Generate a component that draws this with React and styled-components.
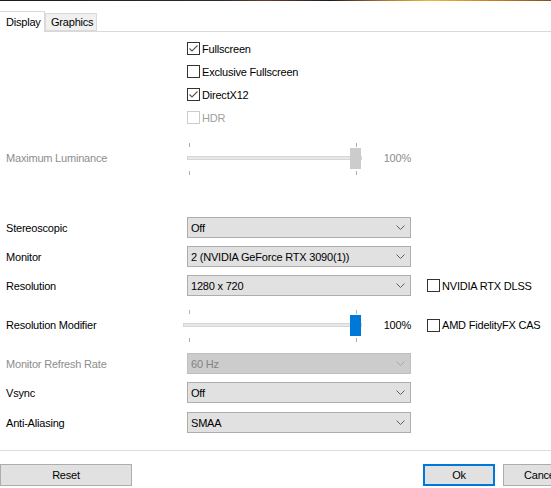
import React from 'react';
import styled, { createGlobalStyle } from 'styled-components';

const Global = createGlobalStyle`
  html, body { margin: 0; padding: 0; background: #fff; }
  body {
    width: 551px;
    height: 488px;
    overflow: hidden;
    font-family: "Liberation Sans", Arial, sans-serif;
    font-size: 11px;
    letter-spacing: -0.2px;
    color: #000;
  }
`;

// dark strip of whatever sits behind the window
const TopStrip = styled.div`
  height: 1px;
  background: linear-gradient(90deg, #1a1a1f 0%, #2a2a33 40%, #6b3a2a 48%, #1c1c22 60%, #b8752a 70%, #f1b43a 78%, #c67a22 90%, #8a4a1a 100%);
`;

const TabBar = styled.div`
  display: flex;
  align-items: flex-end;
  height: 30px;
  border-bottom: 1px solid #d9d9d9;
`;

const Tab = styled.div`
  height: ${p => (p.$active ? '21px' : '18px')};
  margin-bottom: ${p => (p.$active ? '-1px' : '0')};
  box-sizing: border-box;
  padding: 0 ${p => (p.$active ? '6px' : '5px')};
  display: flex;
  align-items: center;
  background: ${p => (p.$active ? '#fff' : '#f0f0f0')};
  border: 1px solid #d9d9d9;
  border-bottom: ${p => (p.$active ? 'none' : '1px solid #d9d9d9')};
  border-left: ${p => (p.$active ? 'none' : '1px solid #d9d9d9')};
  width: ${p => p.$w}px;
`;

const Panel = styled.div`
  padding-top: 5px;
`;

const Row = styled.div`
  display: grid;
  grid-template-columns: 187px 224px auto;
  align-items: center;
  height: ${p => p.$h}px;
  margin-top: ${p => p.$mt || 0}px;
`;

const Label = styled.div`
  padding-left: 6px;
  color: ${p => (p.$disabled ? '#8d8d8d' : '#000')};
  white-space: nowrap;
`;

const CheckWrap = styled.label`
  display: flex;
  align-items: center;
  gap: 2px;
  color: ${p => (p.$disabled ? '#a0a0a0' : '#000')};
  white-space: nowrap;
  padding-left: ${p => p.$pl || 0}px;
`;

const Box = styled.span`
  width: 13px;
  height: 13px;
  box-sizing: border-box;
  border: 1px solid ${p => (p.$disabled ? '#cccccc' : '#333333')};
  background: #fff;
  display: flex;
  align-items: center;
  justify-content: center;
`;

const Check = ({ label, checked, disabled, pl }) => (
  <CheckWrap $disabled={disabled} $pl={pl}>
    <Box $disabled={disabled}>
      {checked && (
        <svg width="11" height="11" viewBox="0 0 11 11">
          <path d="M1.5 5.5 L4 8 L9.5 2.5" fill="none" stroke="#555" strokeWidth="1.1" />
        </svg>
      )}
    </Box>
    {label}
  </CheckWrap>
);

const Combo = styled.div`
  height: 21px;
  box-sizing: border-box;
  border: 1px solid ${p => (p.$disabled ? '#bfbfbf' : '#adadad')};
  background: ${p => (p.$disabled ? '#cccccc' : '#e1e1e1')};
  color: ${p => (p.$disabled ? '#838383' : '#000')};
  display: flex;
  align-items: center;
  justify-content: space-between;
  padding: 0 5px 0 3px;
`;

const Chevron = ({ disabled }) => (
  <svg width="9" height="5" viewBox="0 0 9 5">
    <path d="M0.5 0.5 L4.5 4.5 L8.5 0.5" fill="none" stroke={disabled ? '#a8a8a8' : '#606060'} strokeWidth="1" />
  </svg>
);

const Select = ({ value, disabled }) => (
  <Combo $disabled={disabled}>
    <span>{value}</span>
    <Chevron disabled={disabled} />
  </Combo>
);

const SliderBox = styled.div`
  display: flex;
  align-items: center;
  margin-left: ${p => p.$ml || 0}px;
`;

const Track = styled.div`
  position: relative;
  width: ${p => p.$w}px;
  height: 36px;
`;

const Rail = styled.div`
  position: absolute;
  left: 0;
  right: 0;
  top: 16px;
  height: 4px;
  box-sizing: border-box;
  background: #e7e7e7;
  border: 1px solid #d6d6d6;
`;

const Tick = styled.div`
  position: absolute;
  left: ${p => p.$x}px;
  top: ${p => p.$y}px;
  width: 1px;
  height: 4px;
  background: #b0b0b0;
`;

const Thumb = styled.div`
  position: absolute;
  right: 1px;
  top: 8px;
  width: 11px;
  height: 21px;
  background: ${p => (p.$disabled ? '#cccccc' : '#0078d7')};
`;

const Percent = styled.div`
  flex: 1;
  text-align: right;
  color: ${p => (p.$disabled ? '#8d8d8d' : '#000')};
`;

const Slider = ({ disabled, ml = 0 }) => {
  const w = 175 - ml;
  return (
    <SliderBox $ml={ml}>
      <Track $w={w}>
        <Rail />
        <Tick $x={2 - ml} $y={3} />
        <Tick $x={2 - ml} $y={31} />
        <Tick $x={169 - ml} $y={3} />
        <Tick $x={169 - ml} $y={31} />
        <Thumb $disabled={disabled} />
      </Track>
      <Percent $disabled={disabled}>100%</Percent>
    </SliderBox>
  );
};

const Separator = styled.div`
  height: 1px;
  background: #dcdcdc;
  margin-top: 17px;
`;

const Footer = styled.div`
  display: flex;
  margin-top: 13px;
  height: 22px;
`;

const Button = styled.button`
  box-sizing: border-box;
  height: 22px;
  width: ${p => p.$w}px;
  margin-left: ${p => p.$ml || 0}px;
  flex-shrink: 0;
  font-family: inherit;
  font-size: 11px;
  letter-spacing: -0.2px;
  color: #000;
  background: #e1e1e1;
  border: ${p => (p.$primary ? '2px solid #0078d7' : '1px solid #adadad')};
  padding: 0;
`;

export default function App() {
  return (
    <>
      <Global />
      <TopStrip />
      <TabBar>
        <Tab $active $w={45}>Display</Tab>
        <Tab $w={52}>Graphics</Tab>
      </TabBar>
      <Panel>
        <Row $h={23}><div /><Check label="Fullscreen" checked /></Row>
        <Row $h={23}><div /><Check label="Exclusive Fullscreen" /></Row>
        <Row $h={23}><div /><Check label="DirectX12" checked /></Row>
        <Row $h={23}><div /><Check label="HDR" disabled /></Row>

        <Row $h={36} $mt={11}>
          <Label $disabled>Maximum Luminance</Label>
          <Slider disabled />
        </Row>

        <Row $h={21} $mt={41}>
          <Label>Stereoscopic</Label>
          <Select value="Off" />
        </Row>
        <Row $h={21} $mt={8}>
          <Label>Monitor</Label>
          <Select value="2 (NVIDIA GeForce RTX 3090(1))" />
        </Row>
        <Row $h={21} $mt={8}>
          <Label>Resolution</Label>
          <Select value="1280 x 720" />
          <Check label="NVIDIA RTX DLSS" pl={16} />
        </Row>

        <Row $h={36} $mt={11}>
          <Label>Resolution Modifier</Label>
          <Slider ml={-4} />
          <Check label="AMD FidelityFX CAS" pl={16} />
        </Row>

        <Row $h={21} $mt={10}>
          <Label $disabled>Monitor Refresh Rate</Label>
          <Select value="60 Hz" disabled />
        </Row>
        <Row $h={21} $mt={8}>
          <Label>Vsync</Label>
          <Select value="Off" />
        </Row>
        <Row $h={21} $mt={9}>
          <Label>Anti-Aliasing</Label>
          <Select value="SMAA" />
        </Row>
      </Panel>
      <Separator />
      <Footer>
        <Button $w={132}>Reset</Button>
        <Button $w={72} $ml={291} $primary>Ok</Button>
        <Button $w={75} $ml={8}>Cancel</Button>
      </Footer>
    </>
  );
}
